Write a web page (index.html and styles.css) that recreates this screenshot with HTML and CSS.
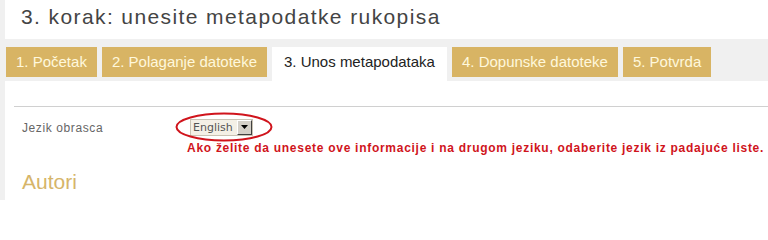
FILE: index.html
```html
<!DOCTYPE html>
<html lang="hr">
<head>
<meta charset="utf-8">
<title>3. korak: unesite metapodatke rukopisa</title>
<link rel="stylesheet" href="styles.css">
</head>
<body>
<div class="frame">
  <h1 class="title">3. korak: unesite metapodatke rukopisa</h1>
  <ul class="tabs">
    <li class="tab">1. Početak</li>
    <li class="tab">2. Polaganje datoteke</li>
    <li class="tab active">3. Unos metapodataka</li>
    <li class="tab">4. Dopunske datoteke</li>
    <li class="tab">5. Potvrda</li>
  </ul>
  <div class="content">
    <div class="rule"></div>
    <div class="form-row">
      <div class="label">Jezik obrasca</div>
      <div class="field">
        <div class="select-wrap">
          <div class="select">
            <span class="select-text">English</span>
            <span class="select-btn"><svg width="8" height="5" viewBox="0 0 8 5"><path d="M0 0H7L3.5 4Z" fill="#000"/></svg></span>
          </div>
          <svg class="ring" width="98" height="30" viewBox="0 0 98 30"><ellipse cx="49" cy="15" rx="47.5" ry="13.5" fill="none" stroke="#d0141c" stroke-width="2"/></svg>
        </div>
        <div class="hint">Ako želite da unesete ove informacije i na drugom jeziku, odaberite jezik iz padajuće liste.</div>
      </div>
    </div>
    <h2 class="section">Autori</h2>
  </div>
</div>
</body>
</html>
```
FILE: styles.css
```css
html, body {
  margin: 0;
  padding: 0;
  background: #ffffff;
}
body {
  font-family: "Liberation Sans", Arial, sans-serif;
  height: 200px;
  overflow: hidden;
}
.frame {
  border-left: 5px solid #f0f0f0;
  min-height: 200px;
}
.title {
  margin: 0;
  padding: 5px 0 0 16px;
  height: 39px;
  box-sizing: border-box;
  font-size: 21px;
  line-height: 24px;
  letter-spacing: 1.4px;
  font-weight: normal;
  color: #444444;
}
.tabs {
  display: flex;
  align-items: flex-start;
  gap: 5px;
  margin: 0;
  padding: 8px 0 0 1px;
  height: 42px;
  box-sizing: border-box;
  list-style: none;
  background: #f0f0f0;
}
.tab {
  height: 30px;
  padding: 0 10px;
  font-size: 15px;
  line-height: 30px;
  color: #fff8dc;
  background: #d8b464;
  white-space: nowrap;
}
.tab.active {
  height: 34px;
  padding: 0 12px;
  color: #222222;
  background: #ffffff;
}
.content {
  padding-left: 9px;
}
.rule {
  margin-top: 25px;
  border-top: 1px solid #d0d0d0;
}
.form-row {
  display: grid;
  grid-template-columns: 165px 1fr;
  padding-left: 8px;
  margin-top: 12px;
}
.label {
  font-size: 12px;
  letter-spacing: 0.6px;
  color: #666666;
  line-height: 17px;
  padding-top: 1px;
}
.field {
  display: flex;
  flex-direction: column;
}
.select-wrap {
  position: relative;
  align-self: flex-start;
  margin-left: 3px;
}
.select {
  display: flex;
  align-items: center;
  width: 63px;
  height: 17px;
  box-sizing: border-box;
  border: 1px solid #c9c3b4;
  background: #f4f0e6;
}
.select-text {
  flex: 1;
  font-family: "DejaVu Sans", Verdana, sans-serif;
  font-size: 11px;
  color: #555555;
  padding-left: 2px;
  line-height: 15px;
}
.select-btn {
  width: 15px;
  height: 15px;
  box-sizing: border-box;
  display: flex;
  align-items: center;
  justify-content: center;
  background: #d4d0c8;
  border: 1px solid;
  border-color: #ffffff #404040 #404040 #ffffff;
}
.ring {
  position: absolute;
  left: -15px;
  top: -7px;
}
.hint {
  margin-top: 5px;
  font-size: 12px;
  font-weight: bold;
  letter-spacing: 0.72px;
  line-height: 14px;
  color: #d0141c;
  white-space: nowrap;
}
.section {
  margin: 14px 0 0 8px;
  font-size: 21px;
  line-height: 26px;
  font-weight: normal;
  color: #d6b56a;
}
```
